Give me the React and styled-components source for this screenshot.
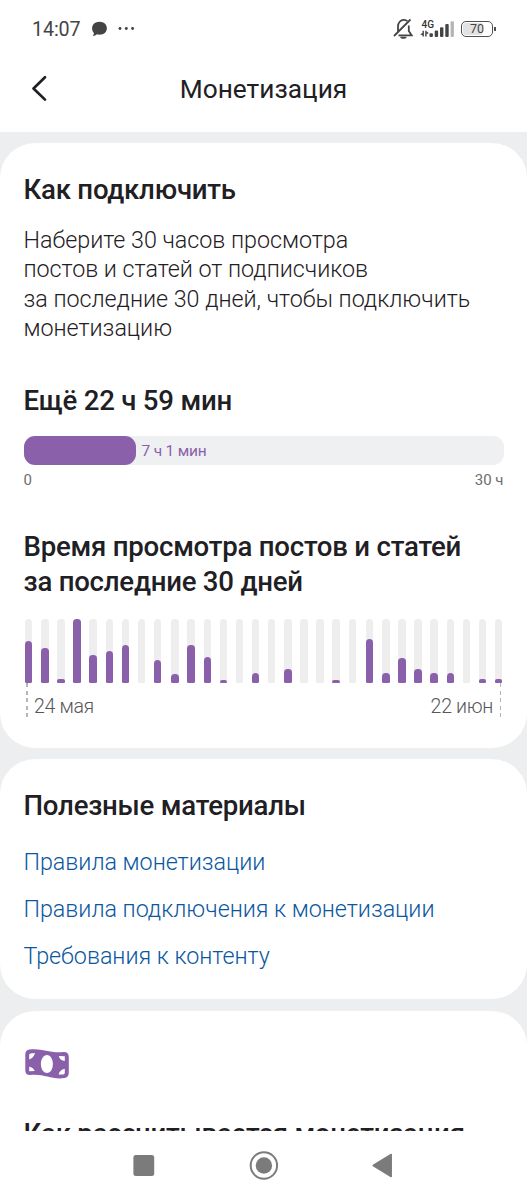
import React from "react";
import styled, { createGlobalStyle } from "styled-components";

const PURPLE = "#8b60aa";

const Global = createGlobalStyle`
  * { box-sizing: border-box; }
  html, body { margin: 0; padding: 0; }
  body { background: #fff; font-family: Roboto, "Liberation Sans", sans-serif; color: #1f2024; overflow: hidden; }
  h1, h2, p { margin: 0; }
`;

const Screen = styled.div`
  width: 527px;
  height: 1200px;
  display: flex;
  flex-direction: column;
  overflow: hidden;
  background: #fff;
`;

const StatusBar = styled.div`
  height: 57px;
  flex: none;
  display: flex;
  align-items: center;
  padding: 0 31px 0 32px;
`;

const Clock = styled.span`
  font-size: 19.7px;
  line-height: 24px;
  letter-spacing: -0.1px;
  color: #444;
  width: 59px;
  padding-top: 2px;
  white-space: nowrap;
`;

const StatusIcons = styled.div`
  display: flex;
  align-items: center;
  margin-left: auto;
`;

const Network = styled.div`
  display: flex;
  flex-direction: column;
  width: 34px;
  height: 18px;
  margin: 0 7px;
`;

const NetworkType = styled.span`
  font-size: 10px;
  line-height: 9px;
  height: 10px;
  font-weight: 500;
  color: #333;
  padding-left: 1.5px;
`;

const Signal = styled.svg`
  display: block;
  margin-top: -10px;
`;

const Battery = styled.div`
  position: relative;
  width: 32px;
  height: 16px;
  margin-right: 3px;
  border: 1.6px solid #505050;
  border-radius: 5px;
  background: linear-gradient(90deg, #e2e2e2 68%, #fff 68%);
  box-shadow: inset 0 0 0 1px #fff;
  font-size: 12.5px;
  line-height: 14px;
  text-align: center;
  color: #444;
  &::after {
    content: "";
    position: absolute;
    right: -4px;
    top: 5px;
    width: 2px;
    height: 4px;
    background: #505050;
  }
`;

const Header = styled.header`
  height: 75px;
  flex: none;
  display: grid;
  grid-template-columns: 80px 1fr 80px;
  align-items: start;
`;

const BackButton = styled.button`
  border: 0;
  padding: 18px 0 0 31px;
  background: none;
  display: flex;
`;

const Title = styled.h1`
  font-size: 26.3px;
  line-height: 32px;
  font-weight: 400;
  text-align: center;
  padding-top: 16px;
`;

const Content = styled.main`
  flex: 1;
  min-height: 0;
  overflow: hidden;
  background: #edeef0;
  padding-top: 11.3px;
  display: flex;
  flex-direction: column;
  gap: 11.5px;
`;

const Card = styled.section`
  flex: none;
  height: ${(p) => p.$h}px;
  border-radius: 35px;
  background: #fff;
  padding: ${(p) => p.$top}px 23.5px 0;
`;

const Heading = styled.h2`
  font-size: 27.6px;
  line-height: 35.1px;
  font-weight: 500;
  white-space: nowrap;
  letter-spacing: -0.23px;
  margin-top: ${(p) => p.$gap || 0}px;
`;

const Body = styled.p`
  margin-top: 19.3px;
  font-size: 23.3px;
  line-height: 29.3px;
  font-weight: 300;
  letter-spacing: -0.03px;
  white-space: nowrap;
`;

const Progress = styled.div`
  height: 29px;
  margin-top: 18px;
  border-radius: 11px;
  background: #eff0f2;
  display: flex;
  align-items: center;
`;

const ProgressFill = styled.div`
  width: 112px;
  height: 29px;
  border-radius: 11px;
  background: ${PURPLE};
`;

const ProgressLabel = styled.span`
  margin-left: 6px;
  padding-top: 2px;
  font-size: 15.5px;
  letter-spacing: -0.2px;
  color: ${PURPLE};
`;

const Scale = styled.div`
  display: flex;
  justify-content: space-between;
  margin-top: 6px;
  font-size: 15px;
  line-height: 18px;
  color: #6d6e70;
`;

const Chart = styled.div`
  display: flex;
  height: 64.5px;
  margin: 19.5px 0 0 1.5px;
`;

const Track = styled.div`
  flex: none;
  width: 7.4px;
  margin-right: ${(p) => (p.$wide ? 10.1 : 8.72)}px;
  border-radius: 3.5px 3.5px 1.5px 1.5px;
  background: #eee;
  display: flex;
  align-items: flex-end;
`;

const Bar = styled.div`
  width: 100%;
  border-radius: ${(p) => (p.$low ? "2px 2px 1px 1px" : "3.5px 3.5px 1.5px 1.5px")};
  background: ${PURPLE};
`;

const Dates = styled.div`
  display: flex;
  justify-content: space-between;
  padding: 0 2.5px;
  font-size: 19.6px;
  letter-spacing: -0.35px;
  font-weight: 300;
  color: #56575b;
`;

const DateMark = styled.span`
  height: 35px;
  line-height: 47.5px;
  display: flex;
  gap: 6.5px;
  flex-direction: ${(p) => (p.$end ? "row-reverse" : "row")};
`;

const Dash = styled.i`
  width: 1.5px;
  height: 35px;
  background: repeating-linear-gradient(180deg, #b5b5b5 0 4px, transparent 4px 7.6px);
`;

const Links = styled.nav`
  display: flex;
  flex-direction: column;
  gap: 17.7px;
  margin-top: 25px;
`;

const Link = styled.a`
  font-size: 23.3px;
  line-height: 29.2px;
  font-weight: 300;
  letter-spacing: -0.03px;
  color: #0b57a0;
  white-space: nowrap;
`;

const MoneyIcon = styled.svg`
  display: block;
  margin-bottom: 35px;
`;

const NavBar = styled.footer`
  flex: none;
  height: 69px;
  display: flex;
  justify-content: center;
  background: #fff;
`;

const values = [42.5, 35.5, 4.5, 64.5, 28, 32.5, 38.5, 0, 23.5, 9, 38.5, 26.5, 3, 0, 10.5, 0, 14.5, 0, 0, 3, 0, 44, 10.5, 25, 14.5, 10.5, 10.5, 0, 4.5, 4.5];
const wideGaps = [8, 20];

export default function App() {
  return (
    <Screen>
      <Global />
      <StatusBar>
        <Clock>14:07</Clock>
        <svg width="46" height="18" viewBox="91 20 46 18">
          <path d="M99.5 21.7c4.3 0 7.4 2.8 7.4 6.5s-3.1 6.5-7.4 6.5c-.9 0-1.8-.1-2.6-.4-1.1 1-2.5 1.6-4.2 1.7.8-.9 1.2-1.9 1.2-3-1.2-1.2-1.8-2.9-1.8-4.8 0-3.7 3.1-6.5 7.4-6.5z" fill="#444" />
          <g fill="#444">
            <circle cx="120" cy="28.5" r="1.45" />
            <circle cx="126.3" cy="28.5" r="1.45" />
            <circle cx="132.6" cy="28.5" r="1.45" />
          </g>
        </svg>
        <StatusIcons>
          <svg width="20" height="22" viewBox="393 17.5 20 22" fill="none" stroke="#444" strokeWidth="1.8">
            <path d="M394 35.5L410.5 19" />
            <path d="M407.3 20.6C405.5 18.6 401.8 19 399.9 21C398.5 22.5 398 24 398 26V31M408.8 25V30.5L411.6 34.8H398.5" />
            <path d="M400.5 36.6H406.300L405.300 37.8H401.5Z" strokeWidth="0.8" fill="#444" />
          </svg>
          <Network>
            <NetworkType>4G</NetworkType>
            <Signal width="34" height="18" viewBox="420 19.5 34 18">
              <g fill="#444">
                <path d="M422.500 30.300h1.400v5.700h-1.400zM425.200 30.300h1.400v5.700h-1.400zM420.200 33.800l2.300-1.400v2.400zM428.800 32.400l-2.300-1.400v2.900z" />
                <rect x="429.5" y="32.8" width="3.4" height="3.7" rx="1" />
                <rect x="434.7" y="30" width="3.4" height="6.5" rx="1" />
                <rect x="440" y="26.8" width="3.4" height="9.7" rx="1" />
                <rect x="445.3" y="23.5" width="3.4" height="13" rx="1" />
              </g>
              <rect x="450.6" y="20.8" width="3.3" height="15.7" rx="1" fill="#b4b4b4" />
            </Signal>
          </Network>
          <Battery>70</Battery>
        </StatusIcons>
      </StatusBar>
      <Header>
        <BackButton aria-label="Назад">
          <svg width="17" height="28" viewBox="31 75 17 28" fill="none" stroke="#1f2024" strokeWidth="2.7" strokeLinecap="round" strokeLinejoin="round">
            <path d="M45 77.3L33.5 88.5L45 99.6" />
          </svg>
        </BackButton>
        <Title>Монетизация</Title>
      </Header>
      <Content>
        <Card $h={604.7} $top={28.5}>
          <Heading>Как подключить</Heading>
          <Body>
            Наберите 30 часов просмотра<br />
            постов и статей от подписчиков<br />
            за последние 30 дней, чтобы подключить<br />
            монетизацию
          </Body>
          <Heading $gap={39.5}>Ещё 22 ч 59 мин</Heading>
          <Progress>
            <ProgressFill />
            <ProgressLabel>7 ч 1 мин</ProgressLabel>
          </Progress>
          <Scale><span>0</span><span>30 ч</span></Scale>
          <Heading $gap={40}>Время просмотра постов и статей<br />за последние 30 дней</Heading>
          <Chart>
            {values.map((v, i) => (
              <Track key={i} $wide={wideGaps.includes(i)}>
                {v > 0 && <Bar $low={v < 6} style={{ height: v }} />}
              </Track>
            ))}
          </Chart>
          <Dates>
            <DateMark><Dash />24 мая</DateMark>
            <DateMark $end><Dash />22 июн</DateMark>
          </Dates>
        </Card>
        <Card $h={240} $top={28.5}>
          <Heading>Полезные материалы</Heading>
          <Links>
            <Link>Правила монетизации</Link>
            <Link>Правила подключения к монетизации</Link>
            <Link>Требования к контенту</Link>
          </Links>
        </Card>
        <Card $h={240} $top={36}>
          <MoneyIcon width="47" height="34" viewBox="24 1047 47 34">
            <path fill={PURPLE} fillRule="evenodd" d="M29.5 1049.5C42 1047.700 49 1053.500 63.500 1052Q68.800 1051.800 68.800 1057V1072.500Q68.800 1077.300 64.500 1078C52 1080 44 1073.500 30.500 1075Q25.300 1075.200 25.300 1070.500V1054.500Q25.300 1050.200 29.500 1049.500ZM47 1055C43.500 1055 40.900 1059 40.900 1064S43.500 1073 47 1073S52.900 1069 52.900 1064S50.500 1055 47 1055ZM35 1053L30.500 1053.500Q29.200 1053.700 29.200 1055V1059.600C32 1058.500 34.200 1056.500 35 1053ZM58.800 1056C59.500 1058.800 61.500 1060.600 64.800 1061V1056.300ZM29.200 1066.800V1071.300L34.700 1071C34 1068.800 32 1067.200 29.200 1066.800ZM64.800 1068.800C61.500 1069.500 59.200 1071.500 58.600 1074.500L63.200 1074.500Q64.800 1074.300 64.800 1072.800Z" />
          </MoneyIcon>
          <Heading>Как рассчитывается монетизация</Heading>
        </Card>
      </Content>
      <NavBar>
        <svg width="270" height="69" viewBox="128.8 1131 270 69" fill="#7b7b7b">
          <rect x="133.2" y="1155" width="20.8" height="21" rx="2.5" />
          <circle cx="263.7" cy="1165.5" r="13.2" fill="none" stroke="#7b7b7b" strokeWidth="2" />
          <circle cx="263.7" cy="1165.5" r="8.2" />
          <path d="M373 1165.5L391 1154.5V1176.5Z" stroke="#7b7b7b" strokeWidth="1.5" strokeLinejoin="round" />
        </svg>
      </NavBar>
    </Screen>
  );
}
